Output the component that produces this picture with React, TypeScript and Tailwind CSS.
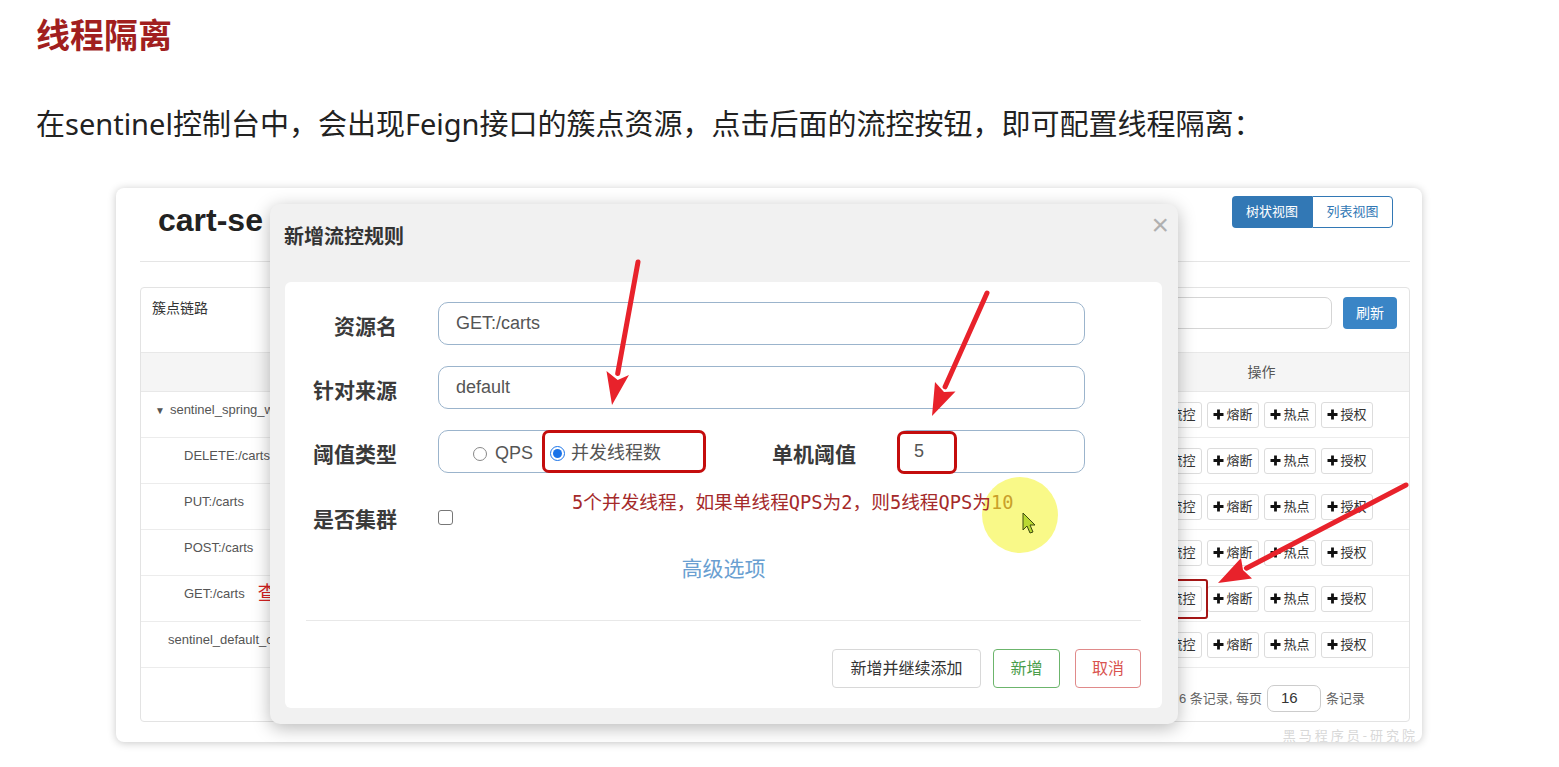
import React from "react";

const Plus = () => (
  <svg width="11" height="11" viewBox="0 0 11 11" className="shrink-0">
    <path d="M5.5 0.5v10M0.5 5.5h10" stroke="#111" strokeWidth="2.8" />
  </svg>
);

const ActionBtn = ({ label }: { label: string }) => (
  <div className="flex h-[26px] w-[52px] items-center justify-center gap-[2px] rounded-[3px] border border-[#dcdcdc] bg-white text-[13px] text-[#333]">
    <Plus />
    <span>{label}</span>
  </div>
);

const rows: { name: React.ReactNode; pl: string }[] = [
  {
    name: (
      <span>
        <span className="mr-[5px] text-[10px]">▼</span>sentinel_spring_w
      </span>
    ),
    pl: "pl-[14px]",
  },
  { name: "DELETE:/carts", pl: "pl-[43px]" },
  { name: "PUT:/carts", pl: "pl-[43px]" },
  { name: "POST:/carts", pl: "pl-[43px]" },
  {
    name: (
      <span className="flex items-center">
        GET:/carts
        <span className="ml-[13px] text-[19px] leading-[16px] text-[#d42020]">查</span>
      </span>
    ),
    pl: "pl-[43px]",
  },
  { name: "sentinel_default_c", pl: "pl-[27px]" },
];

const Label = ({ children, w = "w-[112px]" }: { children: React.ReactNode; w?: string }) => (
  <div className={`${w} shrink-0 pt-[6px] text-right text-[21px] font-bold leading-[28px] text-[#3a3a3a]`}>{children}</div>
);

export default function App() {
  return (
    <div className="relative h-[767px] w-[1559px] overflow-hidden bg-white font-['Noto_Sans','Noto_Sans_CJK_SC',sans-serif]">
      <h1 className="pl-[36px] pt-[14px] text-[34px] font-bold leading-[42px] text-[#a11f1f]">线程隔离</h1>
      <p className="mt-[48px] pl-[36px] text-[29px] leading-[40px] text-[#222]">
        在sentinel控制台中，会出现Feign接口的簇点资源，点击后面的流控按钮，即可配置线程隔离：
      </p>

      {/* screenshot card */}
      <div className="relative ml-[116px] mt-[44px] h-[554px] w-[1306px] rounded-[8px] bg-white pl-[24px] pr-[12px] font-['Liberation_Sans','Noto_Sans_CJK_SC',sans-serif] shadow-[0_1px_8px_rgba(0,0,0,0.22)]">
        <div className="flex h-[74px] justify-between border-b border-[#e5e5e5]">
          <div className="ml-[18px] mt-[14px] whitespace-nowrap text-[32px] font-bold leading-[36px] text-[#222]">cart-se</div>
          <div className="mr-[17px] mt-[8px] flex h-[32px] text-[13px]">
            <div className="flex w-[80px] items-center justify-center rounded-l-[4px] bg-[#3278b5] text-white">树状视图</div>
            <div className="flex w-[81px] items-center justify-center rounded-r-[4px] border border-[#3278b5] text-[#3278b5]">列表视图</div>
          </div>
        </div>

        <div className="mt-[25px] flex h-[435px] flex-col rounded-[4px] border border-[#e3e3e3]">
          <div className="flex h-[64px] justify-between">
            <div className="pl-[11px] pt-[10px] text-[14px] leading-[20px] text-[#333]">簇点链路</div>
            <div className="flex gap-[11px] pr-[12px] pt-[9px]">
              <div className="h-[32px] w-[340px] rounded-[7px] border border-[#d5d5d5]" />
              <div className="flex h-[32px] w-[54px] items-center justify-center rounded-[4px] bg-[#3a85c6] text-[14px] text-white">刷新</div>
            </div>
          </div>
          <div className="flex h-[40px] border-y border-[#e8e8e8] bg-[#f5f5f5]">
            <div className="flex-1" />
            <div className="flex w-[295px] items-center justify-center text-[14px] text-[#555]">操作</div>
          </div>
          {rows.map((r, i) => (
            <div key={i} className="flex h-[46px] border-b border-[#ececec]">
              <div className={`flex-1 ${r.pl} pt-[10px] text-[13px] leading-[16px] text-[#555]`}>{r.name}</div>
              <div className="flex w-[295px] items-center justify-center gap-[5px]">
                <ActionBtn label="流控" />
                <ActionBtn label="熔断" />
                <ActionBtn label="热点" />
                <ActionBtn label="授权" />
              </div>
            </div>
          ))}
          <div className="mt-[17px] flex items-center justify-end gap-[5px] pr-[44px] text-[13px] text-[#666]">
            <span>共 6 条记录, 每页</span>
            <div className="flex h-[27px] w-[54px] items-center rounded-[7px] border border-[#ccc] pl-[13px] text-[15px] text-[#333]">16</div>
            <span>条记录</span>
          </div>
        </div>

        {/* red box around 流控 (under dialog) */}
        <div className="absolute left-[1034px] top-[391px] h-[40px] w-[58px] rounded-[3px] border-2 border-[#a51616]" />

        {/* dialog */}
        <div className="absolute left-[154px] top-[16px] flex h-[520px] w-[908px] flex-col rounded-[10px] bg-[#f1f1f1] shadow-[0_4px_18px_rgba(0,0,0,0.28)]">
          <div className="flex h-[78px] shrink-0 justify-between">
            <div className="pl-[14px] pt-[19px] text-[20px] font-bold leading-[28px] text-[#333]">新增流控规则</div>
            <div className="pr-[9px] pt-[3px] text-[30px] leading-[36px] text-[#b0b0b0]">×</div>
          </div>
          <div className="relative mb-[16px] ml-[15px] mr-[16px] flex flex-1 flex-col rounded-[6px] bg-white pt-[20px]">
            <div className="flex h-[43px] items-center">
              <Label>资源名</Label>
              <div className="ml-[41px] flex h-[43px] w-[647px] items-center rounded-[10px] border border-[#9bb4cc] pl-[17px] text-[18px] text-[#555]">GET:/carts</div>
            </div>
            <div className="mt-[21px] flex h-[43px] items-center">
              <Label>针对来源</Label>
              <div className="ml-[41px] flex h-[43px] w-[647px] items-center rounded-[10px] border border-[#9bb4cc] pl-[17px] text-[18px] text-[#555]">default</div>
            </div>
            <div className="mt-[21px] flex h-[43px] items-center">
              <Label>阈值类型</Label>
              <div className="ml-[41px] flex h-[43px] w-[268px] items-center rounded-[10px] border border-[#9bb4cc] pl-[34px] pt-[4px] text-[18px] text-[#555]">
                <div className="h-[14px] w-[14px] rounded-full border border-[#888]" />
                <span className="ml-[8px]">QPS</span>
                <div className="ml-[17px] flex h-[15px] w-[15px] items-center justify-center rounded-full border border-[#1a73e8]">
                  <div className="h-[9px] w-[9px] rounded-full bg-[#1a73e8]" />
                </div>
                <span className="ml-[6px]">并发线程数</span>
              </div>
              <Label w="w-[150px]">单机阈值</Label>
              <div className="ml-[41px] flex h-[43px] w-[188px] items-center rounded-[10px] border border-[#9bb4cc] pl-[16px] text-[18px] text-[#555]">5</div>
            </div>
            <div className="mt-[21px] flex h-[46px] items-center">
              <Label>是否集群</Label>
              <div className="ml-[41px] h-[15px] w-[15px] rounded-[3px] border border-[#777]" />
            </div>
            <div className="mt-[15px] text-center text-[21px] leading-[28px] text-[#6a9fd1]">高级选项</div>
            <div className="mx-[21px] mt-[37px] h-px bg-[#e8e8e8]" />
            <div className="mt-[28px] flex justify-end gap-[12px] pr-[21px] text-[16px]">
              <div className="flex h-[39px] w-[149px] items-center justify-center rounded-[4px] border border-[#d8d8d8] text-[#333]">新增并继续添加</div>
              <div className="flex h-[39px] w-[67px] items-center justify-center rounded-[4px] border border-[#6cb56c] text-[#4a9d4a]">新增</div>
              <div className="ml-[3px] flex h-[39px] w-[66px] items-center justify-center rounded-[4px] border border-[#e08a8a] text-[#d9534f]">取消</div>
            </div>
          </div>
        </div>
      </div>

      {/* annotations */}
      <div className="absolute left-[542px] top-[430px] h-[43px] w-[164px] rounded-[7px] border-[3px] border-[#c40d0d]" />
      <div className="absolute left-[897px] top-[431px] h-[43px] w-[60px] rounded-[7px] border-[3px] border-[#c40d0d]" />
      <div className="absolute left-[982px] top-[477px] h-[76px] w-[76px] rounded-full bg-[rgba(246,246,90,0.72)]" />
      <div className="absolute left-[572px] top-[491px] whitespace-nowrap font-['DejaVu_Sans_Mono','Noto_Sans_CJK_SC',monospace] text-[18.7px] leading-[24px] text-[#a52a2a]">
        5个并发线程，如果单线程QPS为2，则5线程QPS为<span className="text-[#c9a02a]">10</span>
      </div>
      <div className="absolute right-[141px] top-[726px] text-[13px] tracking-[3px] text-[#d8d8d8]">黑马程序员-研究院</div>

      <svg className="pointer-events-none absolute left-0 top-0" width="1559" height="767" viewBox="0 0 1559 767">
        <g stroke="#e8222b" strokeWidth="5" strokeLinecap="round" fill="none">
          <line x1="638" y1="262" x2="617.7" y2="373.5" />
          <line x1="987" y1="293" x2="945.1" y2="386.8" />
          <line x1="1406" y1="485" x2="1246.4" y2="568.2" />
        </g>
        <g fill="#e8222b">
          <polygon points="612,405 629,375 617.7,380 606.5,371" />
          <polygon points="932,416 955.5,391.5 944,392 935,382" />
          <polygon points="1218,583 1252,578.5 1243,570 1241,558" />
        </g>
        <polygon
          points="1023,513 1023,530 1027,526 1030,533 1033,532 1030,525 1035,525"
          fill="#b9d832"
          stroke="#3c4a10"
          strokeWidth="1"
        />
      </svg>
    </div>
  );
}
